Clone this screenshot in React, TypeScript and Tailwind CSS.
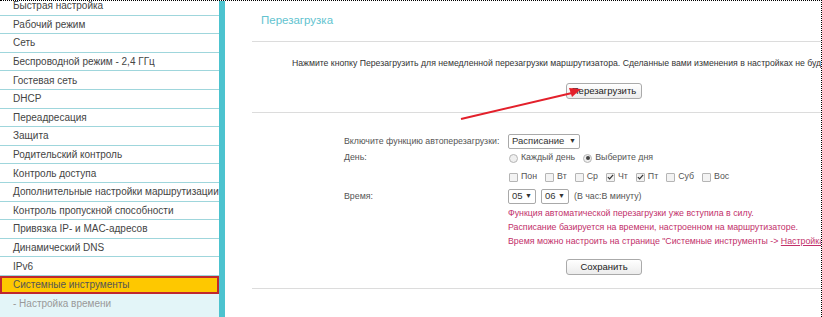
import React from "react";

const menu = [
  "Быстрая настройка",
  "Рабочий режим",
  "Сеть",
  "Беспроводной режим - 2,4 ГГц",
  "Гостевая сеть",
  "DHCP",
  "Переадресация",
  "Защита",
  "Родительский контроль",
  "Контроль доступа",
  "Дополнительные настройки маршрутизации",
  "Контроль пропускной способности",
  "Привязка IP- и MAC-адресов",
  "Динамический DNS",
  "IPv6",
];

const days = [
  { label: "Пон", on: false },
  { label: "Вт", on: false },
  { label: "Ср", on: false },
  { label: "Чт", on: true },
  { label: "Пт", on: true },
  { label: "Суб", on: false },
  { label: "Вос", on: false },
];

const Select = ({ value, w }: { value: string; w: string }) => (
  <div
    className={`${w} h-[15px] flex items-center justify-between px-[3px] border border-[#a9a9a9] rounded-[2px] bg-white text-[9.5px] text-[#333]`}
  >
    <span>{value}</span>
    <span className="text-[7px]">▼</span>
  </div>
);

const Check = ({ on }: { on: boolean }) => (
  <span className="w-[9px] h-[9px] border border-[#b5b5b5] bg-[#f3f3f3] rounded-[1px] flex items-center justify-center">
    {on && (
      <svg width="8" height="8" viewBox="0 0 8 8">
        <path d="M1 4.2 L3 6.2 L7 1.5" stroke="#333" strokeWidth="1.4" fill="none" />
      </svg>
    )}
  </span>
);

const Radio = ({ on }: { on: boolean }) => (
  <span className="w-[9px] h-[9px] rounded-full border border-[#b5b5b5] bg-[#efefef] flex items-center justify-center">
    {on && <span className="w-[4px] h-[4px] rounded-full bg-[#444]" />}
  </span>
);

const Button = ({ title }: { title: string }) => (
  <div className="ml-[314px] w-[76px] h-[16px] flex items-center justify-center border border-[#aaa] rounded-[3px] bg-gradient-to-b from-white to-[#ececec] text-[9.5px] text-[#222]">
    {title}
  </div>
);

const App = () => {
  return (
    <div className="relative w-[822px] h-[317px] overflow-hidden flex bg-white font-['Liberation_Sans',Arial,sans-serif] border-t border-r border-dotted border-black">
      <aside className="w-[219px] flex flex-col -mt-[4px]">
        {menu.map((item) => (
          <div
            key={item}
            className="h-[18.6px] shrink-0 flex items-center pl-[13px] border-b border-[#9fd6dc] text-[10px] text-[#444] whitespace-nowrap overflow-hidden"
          >
            {item}
          </div>
        ))}
        <div className="h-[18px] shrink-0 flex items-center pl-[11px] bg-[#fec800] border-2 border-[#c0282d] text-[10px] text-[#555]">
          Системные инструменты
        </div>
        <div className="h-[18.6px] shrink-0 flex items-center pl-[13px] bg-[#e3f5f8] text-[10px] text-[#999]">
          - Настройка времени
        </div>
        <div className="flex-1 bg-[#e3f5f8]" />
      </aside>
      <div className="w-[6px] bg-[#4cc3cf]" />
      <main className="flex-1 pl-[27px] min-w-0">
        <div className="h-[41px] flex items-center pl-[9px] border-b border-[#dcdcdc] text-[11.5px] text-[#62c3cf]">
          Перезагрузка
        </div>
        <div className="h-[71px] border-b border-[#dcdcdc] pt-[15px]">
          <p className="pl-[40px] text-[8.7px] leading-[12px] text-[#333] whitespace-nowrap">
            Нажмите кнопку Перезагрузить для немедленной перезагрузки маршрутизатора. Сделанные вами изменения в настройках не будут сохранены.
          </p>
          <div className="mt-[14px]">
            <Button title="Перезагрузить" />
          </div>
        </div>
        <div className="h-[176px] border-b border-[#dcdcdc] pt-[21px] text-[8.8px] text-[#555]">
          <div className="flex items-center h-[15px]">
            <span className="w-[256px] pl-[92px] whitespace-nowrap">Включите функцию автоперезагрузки:</span>
            <Select value="Расписание" w="w-[72px]" />
          </div>
          <div className="flex items-center h-[14px] mt-[2px]">
            <span className="w-[256px] pl-[92px]">День:</span>
            <div className="flex items-center gap-[3px] pl-[1px]">
              <Radio on={false} />
              <span className="mr-[5px]">Каждый день</span>
              <Radio on={true} />
              <span>Выберите дня</span>
            </div>
          </div>
          <div className="flex items-center h-[14px] mt-[5px]">
            <span className="w-[256px]" />
            <div className="flex items-center pl-[1px]">
              {days.map((d) => (
                <div key={d.label} className="flex items-center gap-[3px] mr-[8px]">
                  <Check on={d.on} />
                  <span>{d.label}</span>
                </div>
              ))}
            </div>
          </div>
          <div className="flex items-center h-[15px] mt-[5px]">
            <span className="w-[256px] pl-[92px]">Время:</span>
            <Select value="05" w="w-[28px]" />
            <span className="w-[5px]" />
            <Select value="06" w="w-[28px]" />
            <span className="ml-[5px]">(В час:В минуту)</span>
          </div>
          <div className="mt-[2px] pl-[256px] text-[#c2306a] leading-[14px] whitespace-nowrap">
            <div>Функция автоматической перезагрузки уже вступила в силу.</div>
            <div>Расписание базируется на времени, настроенном на маршрутизаторе.</div>
            <div>
              Время можно настроить на странице "Системные инструменты -&gt;{" "}
              <span className="underline">Настройка времени</span>".
            </div>
          </div>
          <div className="mt-[11px]">
            <Button title="Сохранить" />
          </div>
        </div>
      </main>
      <svg className="absolute left-0 top-0 pointer-events-none" width="822" height="317">
        <line x1="461" y1="118" x2="572" y2="92" stroke="#e3202b" strokeWidth="2" />
        <polygon points="581,88 569,87 572,96" fill="#e3202b" />
      </svg>
    </div>
  );
};

export default App;
